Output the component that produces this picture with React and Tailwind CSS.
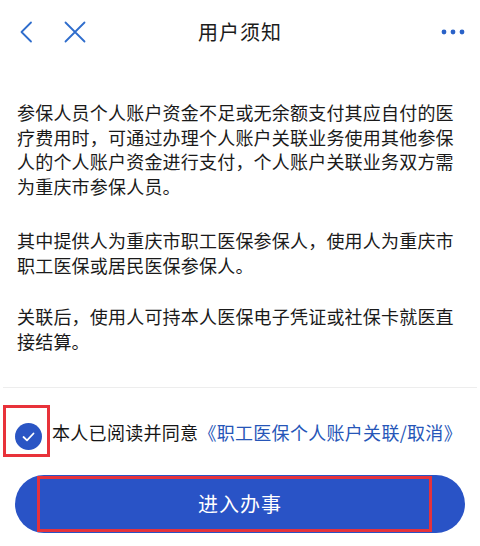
const font = {fontFamily: '"Noto Sans CJK SC", "Noto Sans", sans-serif'};

// Header icons
function BackIcon() {
    return (
        <svg width="14" height="22" viewBox="0 0 14 22" fill="none">
            <path d="M12 1.5 L2.5 11 L12 20.5" stroke="#2f6dcc" strokeWidth="1.8" strokeLinecap="round" strokeLinejoin="round" />
        </svg>
    );
}

function CloseIcon() {
    return (
        <svg width="22" height="22" viewBox="0 0 22 22" fill="none">
            <path d="M1.5 1.5 L20.5 20.5 M20.5 1.5 L1.5 20.5" stroke="#2f6dcc" strokeWidth="1.8" strokeLinecap="round" />
        </svg>
    );
}

function MoreIcon() {
    return (
        <svg width="24" height="6" viewBox="0 0 24 6">
            <circle cx="3" cy="3" r="2.4" fill="#2a62c8" />
            <circle cx="12" cy="3" r="2.4" fill="#2a62c8" />
            <circle cx="21" cy="3" r="2.4" fill="#2a62c8" />
        </svg>
    );
}

const paragraphs = [
    "参保人员个人账户资金不足或无余额支付其应自付的医疗费用时，可通过办理个人账户关联业务使用其他参保人的个人账户资金进行支付，个人账户关联业务双方需为重庆市参保人员。",
    "其中提供人为重庆市职工医保参保人，使用人为重庆市职工医保或居民医保参保人。",
    "关联后，使用人可持本人医保电子凭证或社保卡就医直接结算。",
];

export default function App() {
    return (
        <div className="w-[480px] h-[546px] bg-white overflow-hidden flex flex-col" style={font}>
            {/* top bar */}
            <div className="relative h-16 flex items-center shrink-0">
                <div className="pl-[19px] flex items-center">
                    <BackIcon />
                </div>
                <div className="ml-[31px] flex items-center">
                    <CloseIcon />
                </div>
                <div className="absolute left-0 right-0 top-0 h-16 flex items-center justify-center pointer-events-none">
                    <span className="text-[20px] text-[#1c1c1c] tracking-[1px]">用户须知</span>
                </div>
                <div className="ml-auto pr-[15px] flex items-center">
                    <MoreIcon />
                </div>
            </div>

            {/* notice text */}
            <div className="px-[17px] pt-9 text-[18px] leading-[24.5px] text-[#1a1a1a] tracking-[0.2px]">
                <p>{paragraphs[0]}</p>
                <p className="mt-[30px]">{paragraphs[1]}</p>
                <p className="mt-[27px]">{paragraphs[2]}</p>
            </div>

            <div className="mt-[34px] mx-[3px] h-px bg-[#ededed]" />

            {/* agreement row */}
            <div className="mt-[17px] flex items-center">
                <div className="ml-[3px] border-[3px] border-[#e8323a] pl-[9px] pr-[5px] pt-[15px] pb-[4px]">
                    <div className="w-[27px] h-[27px] rounded-full bg-[#2a55c4] flex items-center justify-center">
                        <svg width="13" height="10" viewBox="0 0 13 10" fill="none">
                            <path d="M1.5 5 L5 8.3 L11.5 1.5" stroke="white" strokeWidth="1.8" strokeLinecap="round" strokeLinejoin="round" />
                        </svg>
                    </div>
                </div>
                <p className="ml-[2px] mt-[2px] text-[18px] leading-6 text-[#161616] tracking-[0.3px] whitespace-nowrap">
                    本人已阅读并同意
                    <span className="text-[#2656b8]">《职工医保个人账户关联/取消》</span>
                </p>
            </div>

            {/* action button */}
            <button className="relative mt-[18px] mx-[15px] h-[58px] rounded-full bg-[#2953c6] flex items-center justify-center">
                <span className="text-[20px] text-white tracking-[1px]">进入办事</span>
                <span className="absolute left-[22px] right-[33px] top-px bottom-px border-[3px] border-[#e5323b]" />
            </button>
        </div>
    );
}
